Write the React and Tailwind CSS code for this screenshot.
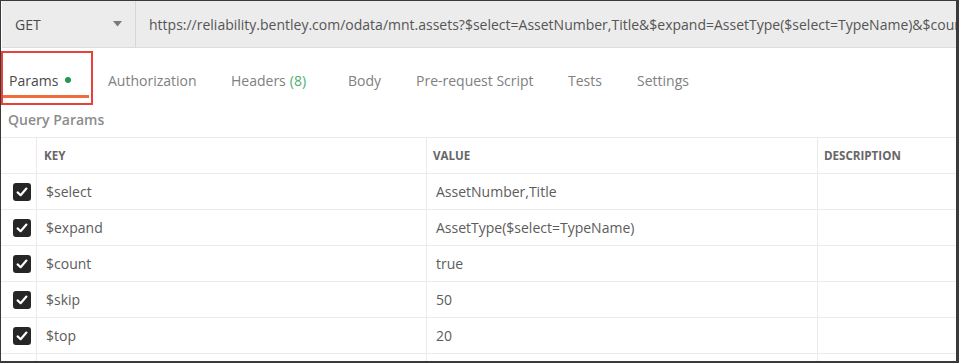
import React from "react";

const tabs = [
  { label: "Params", w: "w-[86px]", ml: "ml-[2px]", active: true },
  { label: "Authorization", w: "w-[123px]", ml: "ml-[19px]" },
  { label: "Headers", w: "w-[117px]", ml: "", count: "(8)" },
  { label: "Body", w: "w-[68px]", ml: "" },
  { label: "Pre-request Script", w: "w-[152px]", ml: "" },
  { label: "Tests", w: "w-[69px]", ml: "" },
  { label: "Settings", w: "w-[90px]", ml: "" },
];

const rows = [
  { key: "$select", value: "AssetNumber,Title" },
  { key: "$expand", value: "AssetType($select=TypeName)" },
  { key: "$count", value: "true" },
  { key: "$skip", value: "50" },
  { key: "$top", value: "20" },
];

function Check() {
  return (
    <div className="w-[18px] h-[18px] rounded-[3px] bg-[#262626] flex items-center justify-center">
      <svg width="14" height="14" viewBox="0 0 14 14" fill="none">
        <path d="M2.6 7.4 L5.6 10.2 L11.4 3.6" stroke="#fff" strokeWidth="2.2" strokeLinecap="round" strokeLinejoin="round" />
      </svg>
    </div>
  );
}

export default function App() {
  return (
    <div
      className="w-[959px] h-[363px] bg-white border-l border-t border-b-2 border-r-[3px] border-[#3a3a3a] overflow-hidden relative"
      style={{ fontFamily: '"Open Sans", "Noto Sans", sans-serif' }}
    >
      {/* URL bar */}
      <div className="h-[47px] bg-[#ececec] border-b border-[#dcdcdc] flex ml-[1px]">
        <div className="w-[134px] shrink-0 flex items-center justify-between pl-[13px] pr-[13px] border-r border-[#d6d6d6]">
          <span className="text-[14px] text-[#4a4a4a] font-medium">GET</span>
          <svg width="9" height="6" viewBox="0 0 9 6">
            <path d="M0 0 L9 0 L4.5 5.5 Z" fill="#7a7a7a" />
          </svg>
        </div>
        <div className="flex-1 min-w-0 flex items-center pl-[13px] overflow-hidden whitespace-nowrap text-[14px] text-[#555]">
          https://reliability.bentley.com/odata/mnt.assets?$select=AssetNumber,Title&amp;$expand=AssetType($select=TypeName)&amp;$count
        </div>
      </div>

      {/* Tabs */}
      <div className="h-[57px] flex relative">
        {tabs.map((t) => (
          <div
            key={t.label}
            className={`${t.w} ${t.ml} h-[50px] pt-[17px] shrink-0 flex items-center whitespace-nowrap text-[14px] border-b-[3px] ${
              t.active ? "border-[#f26b3a] pl-[6px] text-[#4a4a4a]" : "border-transparent text-[#808080]"
            }`}
          >
            {t.label}
            {t.active && <span className="ml-[7px] w-[6px] h-[6px] rounded-full bg-[#1f9a50] inline-block" />}
            {t.count && <span className="ml-[4px] text-[#4fae72]">{t.count}</span>}
          </div>
        ))}
        {/* annotation box */}
        <div className="absolute left-0 top-[3px] w-[92px] h-[54px] border-2 border-[#e8413b]" />
      </div>

      {/* Query Params */}
      <div className="h-[28px] mb-[4px] flex items-center pl-[7px] text-[14px] font-semibold text-[#8c8c8c]">
        Query Params
      </div>

      {/* Table */}
      <div className="grid grid-cols-[36px_390px_391px_1fr] border-t border-[#ebebeb] text-[14px]">
        <div className="h-[36px] border-r border-b border-[#ebebeb]" />
        <div className="h-[36px] border-r border-b border-[#ebebeb] flex items-center pl-[7px] text-[11.6px] font-bold text-[#666]">KEY</div>
        <div className="h-[36px] border-r border-b border-[#ebebeb] flex items-center pl-[6px] text-[11.6px] font-bold text-[#666]">VALUE</div>
        <div className="h-[36px] border-b border-[#ebebeb] flex items-center pl-[6px] text-[11.6px] font-bold text-[#666]">DESCRIPTION</div>

        {rows.map((r) => (
          <React.Fragment key={r.key}>
            <div className="h-[36px] border-r border-b border-[#ebebeb] flex items-center pl-[12px]">
              <Check />
            </div>
            <div className="h-[36px] border-r border-b border-[#ebebeb] flex items-center pl-[9px] text-[#5c5c5c]">{r.key}</div>
            <div className="h-[36px] border-r border-b border-[#ebebeb] flex items-center pl-[9px] text-[#5c5c5c]">{r.value}</div>
            <div className="h-[36px] border-b border-[#ebebeb]" />
          </React.Fragment>
        ))}
        <div className="h-[36px] border-r border-b border-[#ebebeb]" />
        <div className="h-[36px] border-r border-b border-[#ebebeb]" />
        <div className="h-[36px] border-r border-b border-[#ebebeb]" />
        <div className="h-[36px] border-b border-[#ebebeb]" />
      </div>
    </div>
  );
}
